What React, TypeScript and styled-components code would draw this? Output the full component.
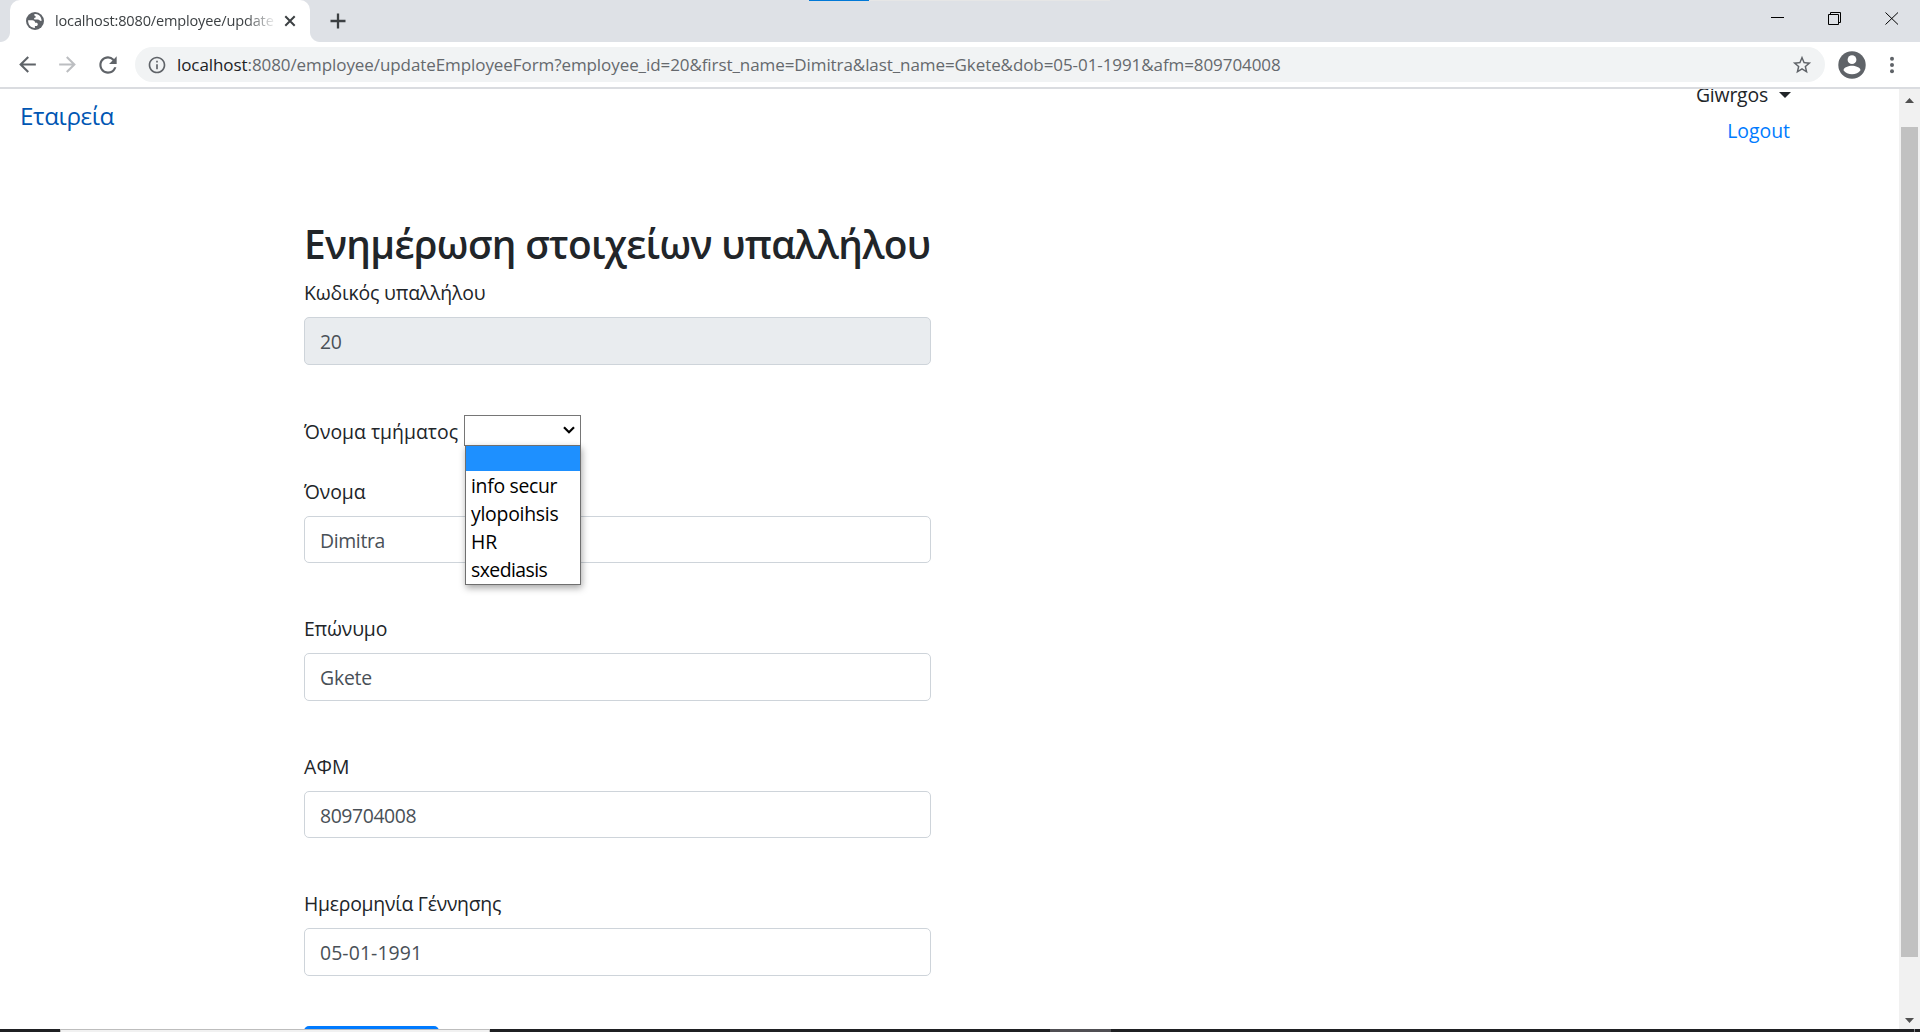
import React from "react";
import styled, { createGlobalStyle } from "styled-components";
import {
  MdArrowBack,
  MdArrowForward,
  MdInfoOutline,
  MdRefresh,
  MdStarBorder,
} from "react-icons/md";

const GlobalStyle = createGlobalStyle`
  *, *::before, *::after { box-sizing: border-box; }
  html, body { margin: 0; background: #fff; overflow: hidden; }
  body {
    font-family: "Open Sans", "Noto Sans", sans-serif;
    font-size: 19.4px;
    line-height: 30px;
    color: #212529;
  }
  svg { display: block; flex: none; }
`;

const Window = styled.div`
  display: flex;
  flex-direction: column;
  width: 1920px;
  height: 1032px;
  overflow: hidden;
`;

const Text = styled.span<{ $track?: number }>`
  letter-spacing: ${(p) => p.$track ?? -0.2}px;
  white-space: pre;
`;

/* Browser chrome */

const TabStrip = styled.div`
  position: relative;
  display: flex;
  flex: none;
  height: 42px;
  padding-left: 10px;
  background: #dee1e6;
`;

const LoadingTrack = styled.div`
  position: absolute;
  top: 0;
  left: 809px;
  width: 301px;
  height: 1px;
  background: linear-gradient(to right, #0078d7 60px, #e6e6e6 60px);
`;

const Tab = styled.div`
  position: relative;
  display: flex;
  align-items: center;
  width: 300px;
  padding-left: 15px;
  background: #fff;
  border-radius: 10px 10px 0 0;

  &::before,
  &::after {
    content: "";
    position: absolute;
    bottom: 0;
    width: 10px;
    height: 10px;
  }
  &::before {
    left: -10px;
    background: radial-gradient(circle at 0 0, transparent 9.5px, #fff 10.5px);
  }
  &::after {
    right: -10px;
    background: radial-gradient(circle at 100% 0, transparent 9.5px, #fff 10.5px);
  }
`;

const TabTitle = styled.div`
  width: 219px;
  margin: 0 10px 2px 10px;
  overflow: hidden;
  font-size: 14.55px;
  line-height: 24px;
  color: #3c4043;
  mask-image: linear-gradient(to right, #000 190px, transparent 222px);
`;

const NewTab = styled.div`
  display: flex;
  align-items: center;
  margin-left: 20px;
`;

const WindowButtons = styled.div`
  display: flex;
  margin: 11px 21px 0 auto;
  gap: 43px;
`;

const Toolbar = styled.div`
  display: flex;
  flex: none;
  align-items: center;
  height: 47px;
  padding: 0 21px 0 15px;
  background: #fff;
  border-bottom: 2px solid #dadce0;
  color: #5f6368;
`;

const NavButton = styled.span<{ $disabled?: boolean }>`
  display: flex;
  justify-content: center;
  width: 40px;
  padding-right: 15px;
  color: ${(p) => (p.$disabled ? "#bcbec1" : "#5f6368")};
`;

const Omnibox = styled.div`
  display: flex;
  flex: none;
  align-items: center;
  width: 1690px;
  height: 35px;
  padding: 0 12px;
  border-radius: 18px;
  background: #f1f3f4;
`;

const Address = styled.div`
  flex: 1;
  margin: 1px 0 0 10px;
  font-size: 17px;
  line-height: 30px;
  color: #65696d;

  b {
    font-weight: 400;
    color: #202124;
  }
`;

const ToolbarEnd = styled.div`
  display: flex;
  align-items: center;
  margin-left: 13px;
  gap: 23px;
`;

/* Page */

const Viewport = styled.div`
  display: flex;
  flex: 1;
  min-height: 0;
`;

const Page = styled.div`
  flex: 1;
  overflow: hidden;
`;

const SiteNav = styled.nav`
  display: flex;
  justify-content: space-between;
  align-items: flex-start;
  height: 75px;
  padding: 0 108px 0 20px;
`;

const Brand = styled.a`
  margin-top: 8px;
  font-size: 24.25px;
  line-height: 37px;
  color: #0056b3;
`;

const UserMenu = styled.div`
  display: flex;
  flex-direction: column;
  align-items: flex-end;
  margin-top: -9px;
  gap: 5px;
`;

const UserName = styled.div`
  display: flex;
  align-items: center;
  gap: 11px;
`;

const Caret = styled.i`
  margin-top: -1px;
  border: 6px solid transparent;
  border-top-color: #212529;
  border-bottom: 0;
`;

const Logout = styled.a`
  margin: 1px 1px 0 0;
  color: #007bff;
`;

const Form = styled.form`
  width: 931px;
  padding: 55px 0 0 304px;
`;

const Title = styled.h2`
  height: 48px;
  margin: 0 0 10px;
  font-size: 38.8px;
  font-weight: 600;
  line-height: 51px;
  white-space: nowrap;
`;

const Group = styled.div`
  margin-bottom: 50px;
`;

const Label = styled.label`
  display: block;
  height: 30px;
  margin-bottom: 10px;
  line-height: 31px;
`;

const Control = styled.div<{ $readOnly?: boolean }>`
  display: flex;
  align-items: center;
  height: 47.5px;
  padding: 2.5px 15px 0;
  border: 1px solid #ced4da;
  border-radius: 5px;
  color: #495057;
  background: ${(p) => (p.$readOnly ? "#e9ecef" : "#fff")};
`;

const SelectRow = styled.div`
  display: flex;
  width: 277px;
  height: 31px;
  margin-bottom: 30px;
  line-height: 33px;
`;

const Select = styled.div`
  position: relative;
  display: flex;
  align-items: center;
  justify-content: flex-end;
  width: 117px;
  height: 31px;
  margin-left: auto;
  padding-right: 5px;
  border: 1px solid #767676;
  background: #fff;
`;

const Options = styled.ul`
  position: absolute;
  z-index: 2;
  top: 29px;
  left: 0;
  width: 116px;
  margin: 0;
  padding: 0;
  list-style: none;
  border: 1px solid #6f6f6f;
  background: #fff;
  box-shadow: 1px 3px 7px rgba(0, 0, 0, 0.35);
`;

const Option = styled.li<{ $active?: boolean }>`
  height: ${(p) => (p.$active ? 25 : 28)}px;
  margin-bottom: ${(p) => (p.$active ? 1 : 0)}px;
  padding-left: 5px;
  line-height: 28px;
  color: #000;
  background: ${(p) => (p.$active ? "#1e90ff" : "#fff")};
`;

const Submit = styled.button`
  display: block;
  width: 135px;
  height: 48px;
  border: 0;
  border-radius: 5px;
  background: #007bff;
`;

const Scrollbar = styled.div`
  display: flex;
  flex: none;
  flex-direction: column;
  align-items: center;
  width: 21px;
  padding: 9px 0 6px;
  background: #f1f1f1;
`;

const Thumb = styled.div`
  width: 17px;
  height: 830px;
  margin: 24px 0 auto;
  background: #c1c1c1;
`;

const Taskbar = styled.div`
  display: flex;
  flex: none;
  height: 3px;
  background: #1f2023;
`;

const TaskbarSearch = styled.div`
  width: 430px;
  margin-left: 60px;
  border: 1px solid #bdbdbd;
  border-bottom: 0;
  background: #f1f1f1;
`;

const TaskbarApp = styled.div`
  width: 61px;
  margin-left: 560px;
  background: #504f53;
`;

const TaskbarEdge = styled.div`
  width: 1px;
  margin: 0 5px 0 auto;
  background: #85868a;
`;

const Globe = () => (
  <svg width="20" height="20" viewBox="0 0 20 20">
    <circle cx="10" cy="10" r="9" fill="#5f6368" />
    <path
      d="M9.4 3.2c2.7-.5 5.3 1 6.4 3.3.6 1.2.8 2.4.7 3.600-.8.1-1.5-.2-2-.8-.5-.7-1.2-.8-2-.8H9.800c-.9 0-1-.9-.4-1.400.4-.4 1.200-.4 1.300-1.100.1-.6-.2-1-.8-1.200-.8-.2-.9-1-.5-1.600z"
      fill="#fff"
    />
    <path
      d="M3.100 9.300h4.200c1.600 0 2.800 1 2.900 2.500h1c1 0 1.600.7 1.600 1.600 0 .9-.7 1.500-1.600 1.500H9.900v2.100c-3.800.1-7-3.200-6.800-7.700z"
      fill="#fff"
    />
  </svg>
);

const Avatar = () => (
  <svg width="28" height="28" viewBox="0 0 28 28">
    <circle cx="14" cy="14" r="13.700" fill="#5f6368" />
    <circle cx="14" cy="8.700" r="4.400" fill="#fff" />
    <path
      d="M5.500 19.300c0-3 5.300-4.600 8.500-4.600s8.500 1.600 8.500 4.600c-1.700 2.500-5 4-8.500 4s-6.800-1.500-8.500-4z"
      fill="#fff"
    />
  </svg>
);

const Arrow = ({ up }: { up?: boolean }) => (
  <svg width="9" height="5" viewBox="0 0 9 5">
    <path d={up ? "M0 5L4.500 0L9 5z" : "M0 0L4.500 5L9 0z"} fill="#505050" />
  </svg>
);

const departments = [
  { name: "info secur", track: -0.31 },
  { name: "ylopoihsis", track: -0.25 },
  { name: "HR", track: -0.1 },
  { name: "sxediasis", track: -0.55 },
];

const fields = [
  { label: "Όνομα", labelTrack: -0.1, value: "Dimitra", track: -0.35 },
  { label: "Επώνυμο", labelTrack: -0.18, value: "Gkete", track: -0.2 },
  { label: "ΑΦΜ", labelTrack: 0.2, value: "809704008", track: -0.4 },
  { label: "Ημερομηνία Γέννησης", labelTrack: -0.26, value: "05-01-1991", track: 0.1 },
];

export default function App() {
  return (
    <Window>
      <GlobalStyle />
      <TabStrip>
        <LoadingTrack />
        <Tab>
          <Globe />
          <TabTitle>
            <Text $track={-0.16}>localhost:8080/employee/updateEmployeeForm</Text>
          </TabTitle>
          <svg width="12" height="12" viewBox="0 0 12 12">
            <path d="M1.300 1.300l9.400 9.400M10.700 1.300l-9.400 9.400" stroke="#3c4043" strokeWidth="2" />
          </svg>
        </Tab>
        <NewTab>
          <svg width="16" height="16" viewBox="0 0 16 16">
            <path d="M8 .5v15M.5 8h15" stroke="#3c4043" strokeWidth="2.300" />
          </svg>
        </NewTab>
        <WindowButtons>
          <svg width="14" height="14" viewBox="0 0 14 14">
            <path d="M0 6.500h13" stroke="#000" />
          </svg>
          <svg width="14" height="14" viewBox="0 0 14 14">
            <path d="M.5 3.500h10v10H.5zM2.500 3.500v-2h10v10h-2" fill="none" stroke="#000" />
          </svg>
          <svg width="14" height="14" viewBox="0 0 14 14">
            <path d="M.5 1.500l12.500 12M13 1.500L.5 13.500" stroke="#000" />
          </svg>
        </WindowButtons>
      </TabStrip>

      <Toolbar>
        <NavButton><MdArrowBack size={25} /></NavButton>
        <NavButton $disabled><MdArrowForward size={25} /></NavButton>
        <NavButton><MdRefresh size={26} /></NavButton>
        <Omnibox>
          <MdInfoOutline size={20} />
          <Address>
            <Text $track={-0.08}>
              <b>localhost</b>
              {":8080/employee/updateEmployeeForm?employee_id=20&first_name=Dimitra&last_name=Gkete&dob=05-01-1991&afm=809704008"}
            </Text>
          </Address>
          <MdStarBorder size={22} />
        </Omnibox>
        <ToolbarEnd>
          <Avatar />
          <svg width="6" height="18" viewBox="0 0 6 18">
            {[2.7, 9, 15.3].map((y) => (
              <circle key={y} cx="3" cy={y} r="2" fill="#5f6368" />
            ))}
          </svg>
        </ToolbarEnd>
      </Toolbar>

      <Viewport>
        <Page>
          <SiteNav>
            <Brand><Text $track={-0.4}>Εταιρεία</Text></Brand>
            <UserMenu>
              <UserName><Text $track={-0.19}>Giwrgos</Text><Caret /></UserName>
              <Logout><Text $track={0}>Logout</Text></Logout>
            </UserMenu>
          </SiteNav>
          <Form>
            <Title><Text $track={-0.67}>Ενημέρωση στοιχείων υπαλλήλου</Text></Title>
            <Group>
              <Label><Text $track={-0.16}>Κωδικός υπαλλήλου</Text></Label>
              <Control $readOnly><Text $track={-0.4}>20</Text></Control>
            </Group>
            <SelectRow>
              <Text $track={0}>Όνομα τμήματος</Text>
              <Select>
                <svg width="12" height="8" viewBox="0 0 12 8">
                  <path d="M1 1.200l5 5 5-5" fill="none" stroke="#000" strokeWidth="2.200" />
                </svg>
                <Options>
                  <Option $active />
                  {departments.map((d) => (
                    <Option key={d.name}><Text $track={d.track}>{d.name}</Text></Option>
                  ))}
                </Options>
              </Select>
            </SelectRow>
            {fields.map((f) => (
              <Group key={f.label}>
                <Label><Text $track={f.labelTrack}>{f.label}</Text></Label>
                <Control><Text $track={f.track}>{f.value}</Text></Control>
              </Group>
            ))}
            <Submit type="button" />
          </Form>
        </Page>
        <Scrollbar>
          <Arrow up />
          <Thumb />
          <Arrow />
        </Scrollbar>
      </Viewport>

      <Taskbar>
        <TaskbarSearch />
        <TaskbarApp />
        <TaskbarEdge />
      </Taskbar>
    </Window>
  );
}
